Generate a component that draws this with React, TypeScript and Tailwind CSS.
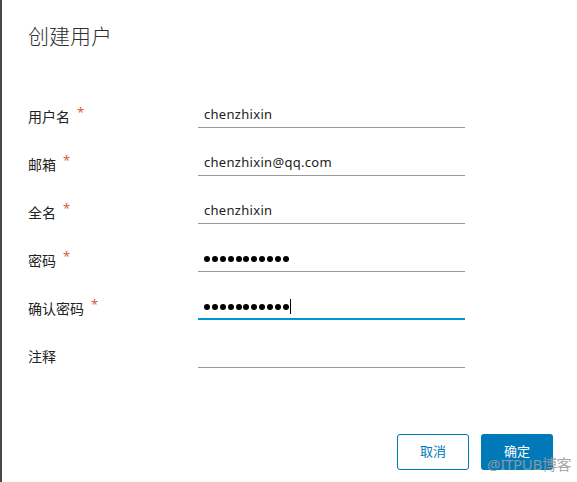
import React from "react";

const font = { fontFamily: '"Noto Sans", "Noto Sans CJK SC", sans-serif' };

function Dots({ cursor }: { cursor?: boolean }) {
  return (
    <div className="flex items-center h-full pl-[6px]">
      {Array.from({ length: 11 }).map((_, i) => (
        <span key={i} className="w-[6px] h-[6px] rounded-full bg-black mr-[1.9px]" />
      ))}
      {cursor && <span className="w-[1px] h-[15px] bg-black -ml-[0.5px]" />}
    </div>
  );
}

function Row({
  label,
  required,
  value,
  password,
  focused,
  cursor,
}: {
  label: string;
  required?: boolean;
  value?: string;
  password?: boolean;
  focused?: boolean;
  cursor?: boolean;
}) {
  return (
    <div className="flex items-end h-[48px]">
      <div className="w-[170px] h-[24px] flex items-center text-[14px] text-[#222]">
        <span>{label}</span>
        {required && <span className="ml-[7px] text-[#e0583e] text-[13px] -mt-[7px]">*</span>}
      </div>
      <div
        className={
          "w-[267px] h-[25px] " +
          (focused ? "border-b-2 border-[#0095d3]" : "border-b border-[#9a9a9a]")
        }
      >
        {password ? (
          <Dots cursor={cursor} />
        ) : (
          <div className="pl-[6px] text-[13px] leading-[22px] text-[#222] tracking-[0.3px]">{value}</div>
        )}
      </div>
    </div>
  );
}

export default function App() {
  return (
    <div className="w-[577px] h-[482px] bg-white border-l-2 border-[#4a4a4a] relative overflow-hidden" style={font}>
      <div className="pl-[26px] pt-[21px]">
        <div className="text-[21px] leading-[30px] text-[#313131] font-light">创建用户</div>
        <div className="mt-[29px]">
          <Row label="用户名" required value="chenzhixin" />
          <Row label="邮箱" required value="chenzhixin@qq.com" />
          <Row label="全名" required value="chenzhixin" />
          <Row label="密码" required password />
          <Row label="确认密码" required password focused cursor />
          <Row label="注释" />
        </div>
        <div className="flex justify-end gap-[12px] pr-[24px] mt-[66px]">
          <button className="w-[72px] h-[36px] rounded-[3px] border border-[#0079b8] text-[#0079b8] text-[13px] bg-white">
            取消
          </button>
          <button className="w-[72px] h-[36px] rounded-[3px] bg-[#0079b8] text-white text-[13px]">
            确定
          </button>
        </div>
      </div>
      <div className="absolute left-[485px] top-[454px] text-[15px] text-[#9c9c9c]/90 leading-[20px] tracking-[-0.3px]">
        @ITPUB博客
      </div>
    </div>
  );
}
